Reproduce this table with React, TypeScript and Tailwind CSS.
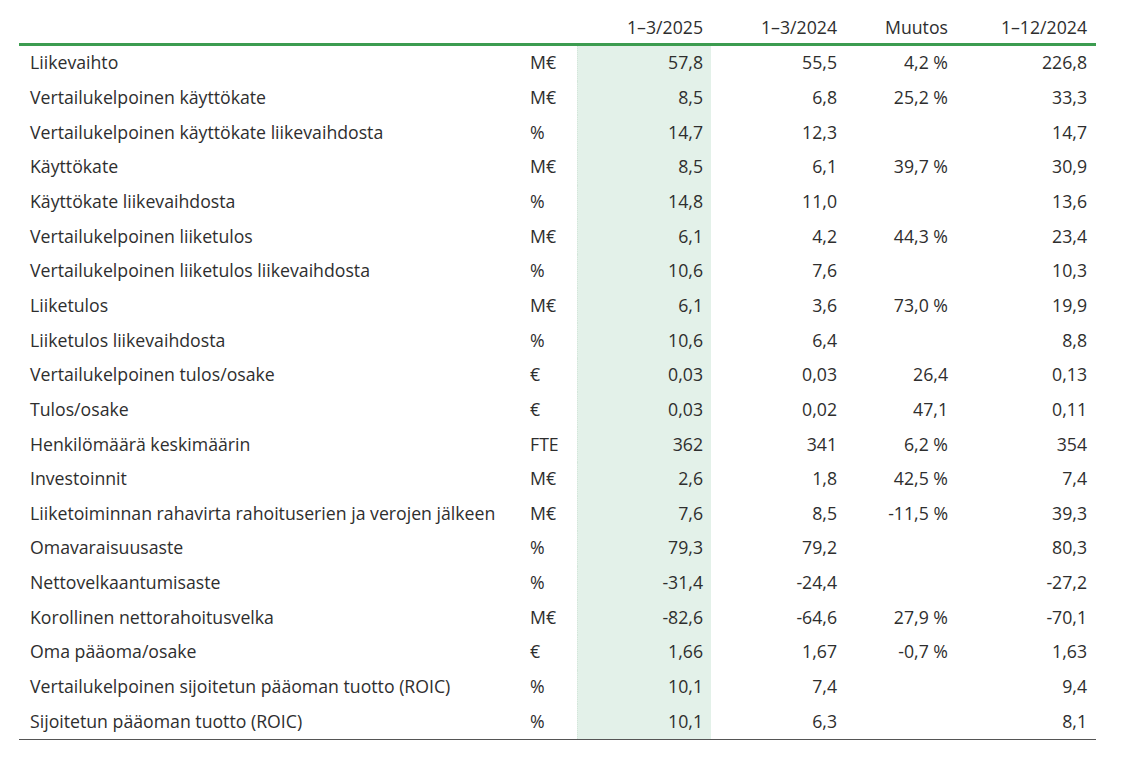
import React from "react";

type Row = [string, string, string, string, string, string];

const rows: Row[] = [
  ["Liikevaihto", "M€", "57,8", "55,5", "4,2 %", "226,8"],
  ["Vertailukelpoinen käyttökate", "M€", "8,5", "6,8", "25,2 %", "33,3"],
  ["Vertailukelpoinen käyttökate liikevaihdosta", "%", "14,7", "12,3", "", "14,7"],
  ["Käyttökate", "M€", "8,5", "6,1", "39,7 %", "30,9"],
  ["Käyttökate liikevaihdosta", "%", "14,8", "11,0", "", "13,6"],
  ["Vertailukelpoinen liiketulos", "M€", "6,1", "4,2", "44,3 %", "23,4"],
  ["Vertailukelpoinen liiketulos liikevaihdosta", "%", "10,6", "7,6", "", "10,3"],
  ["Liiketulos", "M€", "6,1", "3,6", "73,0 %", "19,9"],
  ["Liiketulos liikevaihdosta", "%", "10,6", "6,4", "", "8,8"],
  ["Vertailukelpoinen tulos/osake", "€", "0,03", "0,03", "26,4", "0,13"],
  ["Tulos/osake", "€", "0,03", "0,02", "47,1", "0,11"],
  ["Henkilömäärä keskimäärin", "FTE", "362", "341", "6,2 %", "354"],
  ["Investoinnit", "M€", "2,6", "1,8", "42,5 %", "7,4"],
  ["Liiketoiminnan rahavirta rahoituserien ja verojen jälkeen", "M€", "7,6", "8,5", "-11,5 %", "39,3"],
  ["Omavaraisuusaste", "%", "79,3", "79,2", "", "80,3"],
  ["Nettovelkaantumisaste", "%", "-31,4", "-24,4", "", "-27,2"],
  ["Korollinen nettorahoitusvelka", "M€", "-82,6", "-64,6", "27,9 %", "-70,1"],
  ["Oma pääoma/osake", "€", "1,66", "1,67", "-0,7 %", "1,63"],
  ["Vertailukelpoinen sijoitetun pääoman tuotto (ROIC)", "%", "10,1", "7,4", "", "9,4"],
  ["Sijoitetun pääoman tuotto (ROIC)", "%", "10,1", "6,3", "", "8,1"],
];

export default function App() {
  return (
    <div
      className="w-[1121px] h-[768px] bg-white text-[#2e2e2e] text-[17.7px]"
      style={{ fontFamily: '"Open Sans", "Noto Sans", sans-serif' }}
    >
      <div className="ml-[19px] w-[1077px]">
        {/* header */}
        <div className="flex h-[43px] items-start pt-[17px] leading-[20px] font-medium">
          <div className="w-[501px]" />
          <div className="w-[57px]" />
          <div className="w-[134px] text-right pr-[8px]">1–3/2025</div>
          <div className="w-[134px] text-right pr-[8px]">1–3/2024</div>
          <div className="w-[111px] text-right pr-[8px]">Muutos</div>
          <div className="w-[140px] text-right pr-[9px]">1–12/2024</div>
        </div>
        <div className="h-[3px] bg-[#3c9c50]" />
        <div className="border-b border-[#555555]">
          {rows.map((r, i) => (
            <div key={i} className="flex h-[34.65px] items-center leading-none">
              <div className="w-[501px] pl-[11px] whitespace-nowrap">{r[0]}</div>
              <div className="w-[57px] pl-[10px]">{r[1]}</div>
              <div className="w-[134px] h-full flex items-center justify-end pr-[8px] bg-[#e3f1e9] border-l border-dotted border-[#d3e6da]">
                {r[2]}
              </div>
              <div className="w-[134px] text-right pr-[8px]">{r[3]}</div>
              <div className="w-[111px] text-right pr-[8px] whitespace-nowrap">{r[4]}</div>
              <div className="w-[140px] text-right pr-[9px]">{r[5]}</div>
            </div>
          ))}
        </div>
      </div>
    </div>
  );
}
